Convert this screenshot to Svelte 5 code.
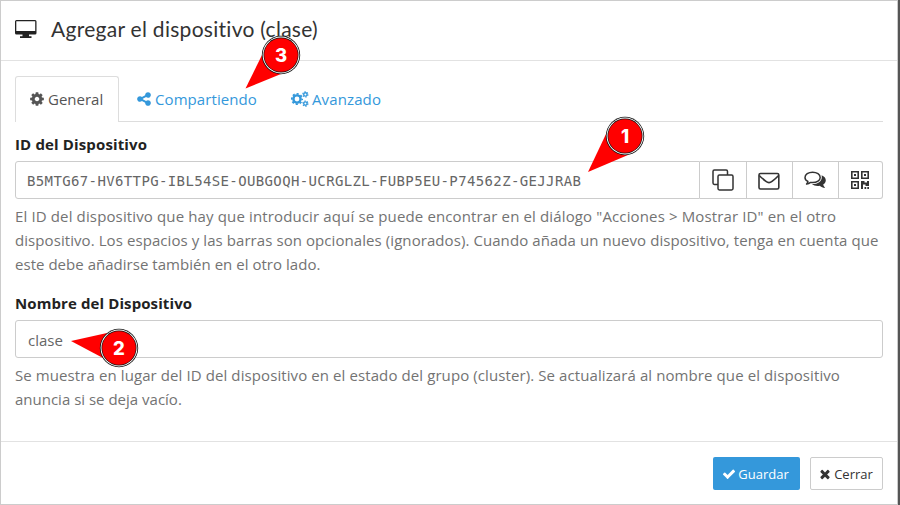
<script>
  const cog = 'M1152 896q0-106-75-181t-181-75-181 75-75 181 75 181 181 75 181-75 75-181zm512-109v222q0 12-8 23t-20 13l-185 28q-19 54-39 91 35 50 107 138 10 12 10 25t-9 23q-27 37-99 108t-94 71q-12 0-26-9l-138-108q-44 23-91 38-16 136-29 186-7 28-36 28h-222q-14 0-24.5-8.5t-11.5-21.5l-28-184q-49-16-90-37l-141 107q-10 9-25 9-14 0-25-11-126-114-165-168-7-10-7-23 0-12 8-23 15-21 51-66.5t54-70.5q-27-50-41-99l-183-27q-13-2-21-12.5t-8-23.5v-222q0-12 8-23t19-13l186-28q14-46 39-92-40-57-107-138-10-12-10-24 0-10 9-23 26-36 98.5-107.5t94.5-71.5q13 0 26 10l138 107q44-23 91-38 16-136 29-186 7-28 36-28h222q14 0 24.5 8.5t11.5 21.5l28 184q49 16 90 37l142-107q9-9 24-9 13 0 25 10 129 119 165 170 7 8 7 22 0 12-8 23-15 21-51 66.5t-54 70.5q26 50 41 98l183 28q13 2 21 12.5t8 23.5z';
  const share = 'M1344 1024q133 0 226.5 93.5t93.5 226.5-93.5 226.5-226.5 93.5-226.5-93.5-93.5-226.5q0-12 2-34l-360-180q-92 86-218 86-133 0-226.5-93.5t-93.5-226.5 93.5-226.5 226.5-93.5q126 0 218 86l360-180q-2-22-2-34 0-133 93.5-226.5t226.5-93.5 226.5 93.5 93.5 226.5-93.5 226.5-226.5 93.5q-126 0-218-86l-360 180q2 22 2 34t-2 34l360 180q92-86 218-86z';
  const check = 'M1671 566q0 40-28 68l-724 724-136 136q-28 28-68 28t-68-28l-136-136-362-362q-28-28-28-68t28-68l136-136q28-28 68-28t68 28l294 295 656-657q28-28 68-28t68 28l136 136q28 28 28 68z';
  const times = 'M1490 1322q0 40-28 68l-136 136q-28 28-68 28t-68-28l-294-294-294 294q-28 28-68 28t-68-28l-136-136q-28-28-28-68t28-68l294-294-294-294q-28-28-28-68t28-68l136-136q28-28 68-28t68 28l294 294 294-294q28-28 68-28t68 28l136 136q28 28 28 68t-28 68l-294 294 294 294q28 28 28 68z';

  // Numbered callouts: circle centre plus the three corners of the pointer.
  const pins = [
    { n: 1, x: 625, y: 136, tail: '588,172 606,134 628,155' },
    { n: 2, x: 119, y: 348, tail: '71,341 107,333 103,358' },
    { n: 3, x: 281, y: 55, tail: '245.5,88.5 262,55 281,74' }
  ];
</script>

<div class="screen">
  <div class="modal">
    <header>
      <svg width="22" height="18" viewBox="0 0 22 18">
        <path fill="#222" fill-rule="evenodd" d="M1.5 0h18.600Q21.500 0 21.500 1.500v11.500Q21.500 14.500 20 14.500H14v1.800h2.500V18H5v-1.700h2.500V14.500h-6Q0 14.500 0 13v-11.500Q0 0 1.5 0zM1.300 1.300v9.700h18.900v-9.700z" />
      </svg>
      <h4>Agregar el dispositivo (clase)</h4>
    </header>

    <main>
      <nav>
        <span class="tab active"><svg width="16" height="16" viewBox="0 0 1792 1792"><path fill="currentColor" d={cog} /></svg><span class="t1">General</span></span>
        <span class="tab share"><svg width="16" height="16" viewBox="0 0 1792 1792"><path fill="currentColor" d={share} /></svg><span class="t2">Compartiendo</span></span>
        <span class="tab adv">
          <svg width="18" height="16" viewBox="0 0 18 16" fill="none" stroke="currentColor">
            <circle cx="6" cy="8" r="3.6" stroke-width="2.4" />
            <circle cx="6" cy="8" r="5.2" stroke-width="1.7" stroke-dasharray="2.1 1.984" stroke-dashoffset="1.05" />
            <circle cx="14.4" cy="3.4" r="1.7" stroke-width="1.4" />
            <circle cx="14.4" cy="3.4" r="2.6" stroke-width="1.1" stroke-dasharray="1.4 1.32" />
            <circle cx="14.4" cy="12.6" r="1.7" stroke-width="1.4" />
            <circle cx="14.4" cy="12.6" r="2.6" stroke-width="1.1" stroke-dasharray="1.4 1.32" />
          </svg><span class="t3">Avanzado</span>
        </span>
      </nav>

      <label class="l1" for="device-id">ID del Dispositivo</label>
      <div class="group">
        <div class="field mono" id="device-id"><span>B5MTG67-HV6TTPG-IBL54SE-OUBGOQH-UCRGLZL-FUBP5EU-P74562Z-GEJJRAB</span></div>
        <div class="btn b1">
          <svg width="22" height="22" viewBox="0 0 22 22" fill="none" stroke="#333" stroke-width="1.5">
            <rect x="6" y="6" width="15" height="15" rx="1.400" />
            <path d="M15.500 6V2.400Q15.500 1 14.100 1H2.400Q1 1 1 2.400V14Q1 15.400 2.400 15.400H6" />
          </svg>
        </div>
        <div class="btn">
          <svg width="22" height="18" viewBox="0 0 22 18" fill="none" stroke="#333" stroke-width="1.6">
            <rect x="1" y="1.500" width="19.800" height="15.500" rx="1.500" />
            <path d="M1.300 3.500Q4 6.400 8 9.400q3 2.400 6 0 4-3 6.600-5.900" />
          </svg>
        </div>
        <div class="btn">
          <svg width="22" height="18" viewBox="0 0 22 18">
            <path fill="none" stroke="#333" stroke-width="1.5" stroke-linejoin="round" d="M8.600 1.200c4.300 0 7.600 2.300 7.600 5.200s-3.300 5.200-7.600 5.200q-1 0-2-.2-1.800 1.300-4 1.700 1.100-1.200 1.300-2.700C2.100 9.500 1 8.100 1 6.400c0-2.900 3.300-5.200 7.600-5.200z" />
            <path fill="#333" d="M17.600 4.300c2.600 1 4.200 2.900 4.200 5 0 1.700-1 3.200-2.600 4.300.3 1.500 1 2.300 1.900 3.400-2.200-.2-4-1-5.500-2.200-3 .5-5.800-.1-7.700-1.700 5.800.2 9.900-2.700 9.900-6.900q0-1-.2-1.900z" />
          </svg>
        </div>
        <div class="btn">
          <svg width="20" height="20" viewBox="0 0 20 20" fill="#333">
            <path fill-rule="evenodd" d="M1 1h8v8H1zM2.600 2.600v4.800h4.800V2.600zM11 1h8v8h-8zM12.600 2.600v4.800h4.800V2.600zM1 11h8v8H1zM2.600 12.600v4.800h4.800v-4.800z" />
            <path d="M4 4h2v2H4zM14 4h2v2h-2zM4 14h2v2H4zM11 11h3.500v1.500H17V11h2v5h-3.500v-1.500H13V19h-2zM14.500 17h1.700v2h-1.700zM17.300 17H19v2h-1.700z" />
          </svg>
        </div>
      </div>
      <p class="help">
        <span class="h1">El ID del dispositivo que hay que introducir aquí se puede encontrar en el diálogo "Acciones &gt; Mostrar ID" en el otro</span>
        <span class="h2">dispositivo. Los espacios y las barras son opcionales (ignorados). Cuando añada un nuevo dispositivo, tenga en cuenta que</span>
        <span class="h3">este debe añadirse también en el otro lado.</span>
      </p>

      <label class="l2" for="device-name">Nombre del Dispositivo</label>
      <div class="field name" id="device-name"><span>clase</span></div>
      <p class="help">
        <span class="h4">Se muestra en lugar del ID del dispositivo en el estado del grupo (cluster). Se actualizará al nombre que el dispositivo</span>
        <span class="h5">anuncia si se deja vacío.</span>
      </p>
    </main>

    <footer>
      <div class="action save"><svg width="14" height="14" viewBox="0 0 1792 1792"><path fill="currentColor" d={check} /></svg><span>Guardar</span></div>
      <div class="action close"><svg width="14" height="14" viewBox="0 0 1792 1792"><path fill="currentColor" d={times} /></svg><span>Cerrar</span></div>
    </footer>
  </div>

  <svg class="pins" width="900" height="505" viewBox="0 0 900 505">
    {#each pins as p}
      <polygon points={p.tail} fill="#f00" />
      <circle cx={p.x} cy={p.y} r="19.2" fill="#111" />
      <circle cx={p.x} cy={p.y} r="18.400" fill="#fff" />
      <circle cx={p.x} cy={p.y} r="17.500" fill="#111" />
      <circle cx={p.x} cy={p.y} r="16.800" fill="#f00" />
      <text x={p.x} y={p.y + 6.700} text-anchor="middle">{p.n}</text>
    {/each}
  </svg>
</div>

<style>
  :global(body) { margin: 0; }
  .screen {
    position: relative;
    width: 900px;
    height: 505px;
    box-sizing: border-box;
    padding-right: 2px;
    background: #555;
    overflow: hidden;
    font-family: "Open Sans", "Noto Sans", sans-serif;
    font-size: 15px;
    color: #666;
    white-space: nowrap;
  }
  .modal {
    height: 505px;
    box-sizing: border-box;
    border: 1px solid #ccc;
    background: #fff;
    display: flex;
    flex-direction: column;
  }
  svg { display: block; flex: none; }
  header {
    height: 56px;
    padding-bottom: 3px;
    border-bottom: 1px solid #e2e2e2;
    display: flex;
    align-items: center;
    padding-left: 14px;
  }
  h4 {
    margin: 0 0 0 14px;
    font: 400 21px/28px Lato, sans-serif;
    letter-spacing: 0.28px;
    color: #333;
  }
  main { height: 380px; padding: 15px 14px 0; box-sizing: border-box; }
  nav {
    height: 46px;
    width: 868px;
    box-sizing: border-box;
    border-bottom: 1px solid #ddd;
    display: flex;
  }
  .tab {
    height: 46px;
    box-sizing: border-box;
    display: flex;
    align-items: center;
    gap: 3px;
    color: #3498db;
  }
  .active {
    width: 104px;
    padding: 0 0 1px 13px;
    color: #555;
    background: #fff;
    border: 1px solid #ddd;
    border-bottom: 0;
    border-radius: 3px 3px 0 0;
  }
  .share { width: 154px; padding-left: 17px; }
  .adv { padding-left: 18px; }
  .t2 { letter-spacing: 0.08px; }
  .t3 { letter-spacing: 0.12px; }
  label {
    display: block;
    font-weight: 700;
    font-size: 15px;
    line-height: 24px;
    color: #222;
  }
  .l1 { margin-top: 10px; letter-spacing: 0.14px; }
  .l2 { margin-top: 15px; letter-spacing: 0.1px; }
  .group { display: flex; width: 868px; margin-top: 5px; }
  .field {
    box-sizing: border-box;
    height: 38px;
    border: 1px solid #ccc;
    border-radius: 3px;
    display: flex;
    align-items: center;
    padding-left: 12px;
    color: #666;
  }
  .mono {
    width: 685px;
    padding-left: 11px;
    padding-top: 1px;
    font-family: "DejaVu Sans Mono", monospace;
    font-size: 14px;
    letter-spacing: 0.37px;
    border-radius: 3px 0 0 3px;
  }
  .btn {
    width: 46px;
    height: 38px;
    box-sizing: border-box;
    border: 1px solid #ccc;
    border-left: 0;
    display: flex;
    align-items: center;
    justify-content: center;
    padding-right: 1px;
  }
  .btn:nth-child(3) { padding-top: 1px; }
  .b1 { width: 47px; }
  .btn:last-child { width: 44px; border-radius: 0 3px 3px 0; }
  .name { width: 868px; margin-top: 5px; padding-top: 1px; }
  .help { margin: 5px 0 0; line-height: 24px; color: #737373; }
  .help span { display: block; width: max-content; }
  .h1 { letter-spacing: 0.135px; }
  .h2 { letter-spacing: 0.075px; }
  .h3 { letter-spacing: 0.03px; }
  .h4 { letter-spacing: 0.094px; }
  footer {
    height: 62px;
    border-top: 1px solid #e2e2e2;
    display: flex;
    justify-content: flex-end;
    gap: 10px;
    padding: 15px 14px 0 0;
    box-sizing: border-box;
  }
  .action {
    height: 33px;
    box-sizing: border-box;
    display: flex;
    align-items: center;
    justify-content: center;
    gap: 2px;
    border-radius: 2px;
    font-size: 13px;
    padding-right: 2px;
  }
  .save { width: 87px; background: #3498db; color: #fff; }
  .close { width: 73px; border: 1px solid #ccc; color: #333; }
  .pins { position: absolute; left: 0; top: 0; }
  .pins text { font: 800 18.500px Inter, sans-serif; fill: #fff; }
</style>
